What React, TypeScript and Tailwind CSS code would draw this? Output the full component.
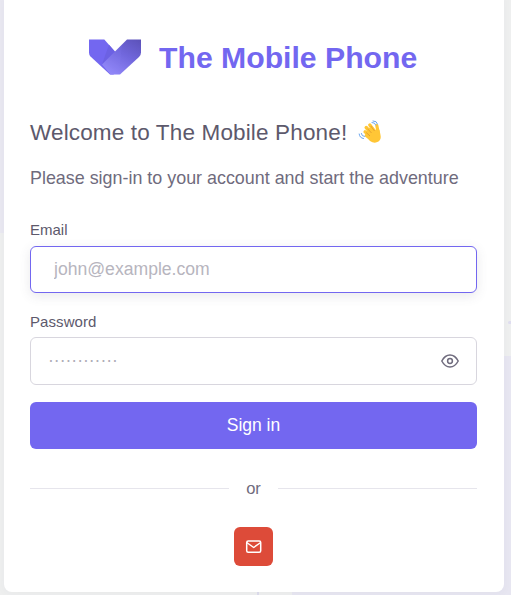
import React from "react";

function Logo() {
  return (
    <svg width="53" height="36" viewBox="0 0 53 36" className="block shrink-0">
      <defs>
        <linearGradient id="arm" x1="1" y1="0" x2="0.3" y2="1">
          <stop offset="0" stopColor="#5b51b8" />
          <stop offset="0.5" stopColor="#7167dd" />
          <stop offset="1" stopColor="#9187f8" />
        </linearGradient>
      </defs>
      <path d="M0 0.500H15.300L25.900 12.500L31 30L24.500 35.500H21L1.500 17.500Q0 16 0 13.500Z" fill="#7367f0" />
      <path d="M25.900 12.500L13 25.500L17 14L20 5.800Z" fill="#6c61e3" />
      <path d="M13 25.500L38 0.500H52V13.500Q52 16 50 18L31 35.500H21.500Z" fill="url(#arm)" />
      <path d="M13 25.500L33 5.500L30 35.500H21.500Z" fill="#8d82f7" opacity="0.12" />
    </svg>
  );
}

function Wave() {
  return (
    <svg width="24" height="24" viewBox="0 0 24 24" className="block shrink-0">
      <g fill="none" stroke="#ffc636" strokeLinecap="round">
        <path d="M8.200 7.500L14 14" strokeWidth="3.400" />
        <path d="M11.800 5L17 12" strokeWidth="3.400" />
        <path d="M7 11.700L13 17" strokeWidth="3.200" />
        <path d="M8.200 15.500L13 19" strokeWidth="3" />
        <path d="M18.800 5.500L20.500 14" strokeWidth="3.200" />
      </g>
      <path d="M9.500 9L14 6.500L17.500 10L19 8L21.500 10L22.500 15Q23.500 19 20.500 21.500Q16.500 24 12 21L7.500 16L8 12Z" fill="#ffc636" />
      <path d="M9.500 8.700L13.500 13M12.800 6L16.500 11M8.200 12.500L12 16" fill="none" stroke="#dd972f" strokeWidth="0.800" />
      <path d="M14 2.500Q17 2.300 17.800 5M15 0.900Q19 0.800 19.500 4M1.200 14Q1.500 18 5.500 18.500M3.300 13.500Q3.500 16.300 6.500 16.500" fill="none" stroke="#6aa5ee" strokeWidth="1" strokeLinecap="round" />
    </svg>
  );
}

export default function App() {
  return (
    <div className="relative h-[595px] w-[511px] overflow-hidden bg-[#eeefef] font-['Liberation_Sans',Arial,sans-serif] text-[#6f6b7d]">
      <div className="absolute left-0 top-0 h-[233px] w-8 bg-[#e9e8f1]" />
      <div className="absolute left-[292px] top-[356px] h-[239px] w-[219px] bg-[#e7e6f1]" />
      <div className="absolute left-[257px] top-[590px] h-[5px] w-[2px] bg-[#dddcec]" />
      <div className="absolute left-[508px] top-[321px] h-[3px] w-[3px] rounded-l-full bg-[#dfddf0]" />
      <main className="relative -mt-2 ml-1 flex h-[600px] w-[500px] flex-col rounded-lg bg-white pl-[26px] pr-[27px] shadow-[0_2px_10px_rgba(75,70,92,0.03)]">
        <header className="mt-[47px] flex h-9 items-center pl-[59px]">
          <Logo />
          <span className="ml-[17px] mt-px whitespace-nowrap text-[30.200px] font-bold leading-9 text-[#7367f0]">The Mobile Phone</span>
        </header>
        <div className="mt-[45px] flex h-6 items-center text-[#5d596c]">
          <h1 className="mt-0.5 whitespace-nowrap text-[22.500px] leading-6 tracking-[0.150px]">Welcome to The Mobile Phone!</h1>
          <span className="ml-[11px]"><Wave /></span>
        </div>
        <p className="mt-[22px] whitespace-nowrap text-[17.900px] leading-6">Please sign-in to your account and start the adventure</p>
        <form className="flex flex-col" onSubmit={(e) => e.preventDefault()}>
          <label htmlFor="email" className="mt-[30px] text-[15px] leading-5 text-[#5d596c]">Email</label>
          <input id="email" placeholder="john@example.com" className="mt-1.5 h-[47px] rounded-md border border-[#7367f0] bg-white px-[23px] text-[17.600px] shadow-[0_3px_12px_rgba(75,70,92,0.12)] outline-none placeholder:text-[#b7b5be]" />
          <label htmlFor="password" className="mt-[19px] text-[15px] leading-5 tracking-[0.080px] text-[#5d596c]">Password</label>
          <div className="mt-[5px] flex h-12 items-center rounded-md border border-[#d8d6de] pl-[17px] pr-[17px]">
            <input id="password" placeholder="············" className="-mt-0.5 min-w-0 flex-1 bg-transparent text-[17.500px] outline-none placeholder:text-[#b0aeb8]" />
            <svg width="18" height="18" viewBox="0 0 18 18" fill="none" stroke="#6f6b7d" strokeWidth="1.500">
              <path d="M0.800 9Q4 3 9 3T17.200 9Q14 15 9 15T0.800 9Z" />
              <circle cx="9" cy="9" r="2.400" />
            </svg>
          </div>
          <button className="mt-[17px] h-[47px] rounded-md bg-[#7367f0] text-[17.500px] text-white">Sign in</button>
        </form>
        <div className="mt-[27px] flex h-6 items-center text-[16.500px]">
          <span className="h-px w-[199px] bg-[#e6e5ec]" />
          <span className="flex-1 text-center">or</span>
          <span className="h-px w-[199px] bg-[#e6e5ec]" />
        </div>
        <button aria-label="Sign in with email" className="mt-[27px] flex h-[39px] w-[39px] items-center justify-center self-center rounded-md bg-[#dd4b39]">
          <svg width="18" height="18" viewBox="0 0 18 18" fill="none" stroke="white" strokeWidth="1.500" strokeLinejoin="round">
            <rect x="1.700" y="3" width="14" height="11.200" rx="1.500" />
            <path d="M1.700 4.500L8.700 9.500L15.700 4.500" />
          </svg>
        </button>
      </main>
    </div>
  );
}
